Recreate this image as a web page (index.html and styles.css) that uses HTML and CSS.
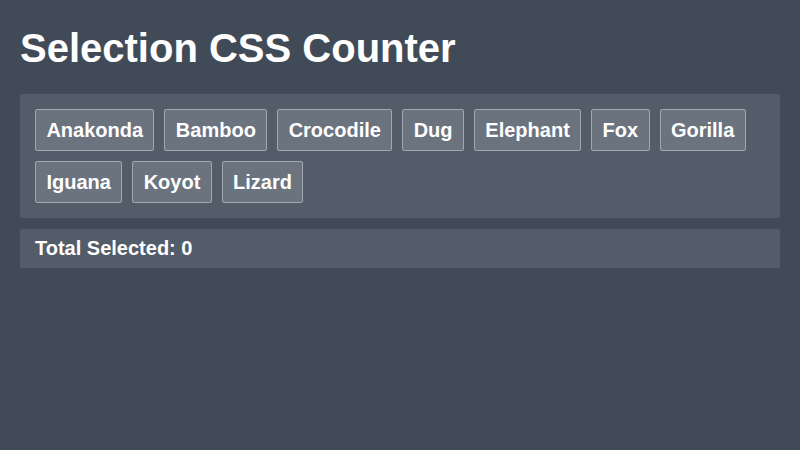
FILE: index.html
```html
<!DOCTYPE html>
<html lang="en">
<head>
<meta charset="utf-8">
<title>Selection CSS Counter</title>
<link rel="stylesheet" href="styles.css">
</head>
<body>
<h1 class="title">Selection CSS Counter</h1>
<div class="panel">
  <button class="chip">Anakonda</button>
  <button class="chip">Bamboo</button>
  <button class="chip">Crocodile</button>
  <button class="chip">Dug</button>
  <button class="chip">Elephant</button>
  <button class="chip">Fox</button>
  <button class="chip">Gorilla</button>
  <button class="chip">Iguana</button>
  <button class="chip">Koyot</button>
  <button class="chip">Lizard</button>
</div>
<div class="total">Total Selected: 0</div>
</body>
</html>
```

FILE: styles.css
```css
html, body {
  margin: 0;
  background: #414b58;
}
body {
  padding: 0 20px;
  font-family: "Liberation Sans", Arial, sans-serif;
  color: #ffffff;
}
.title {
  margin: 25px 0 23px;
  font-size: 40px;
  font-weight: bold;
  line-height: 46px;
}
.panel {
  display: flex;
  flex-wrap: wrap;
  gap: 10px;
  padding: 15px;
  background: #535c69;
  border-radius: 2px;
}
.chip {
  font-family: "Liberation Sans", Arial, sans-serif;
  font-size: 20px;
  font-weight: bold;
  line-height: 22px;
  color: #ffffff;
  background: #6b737f;
  border: 1px solid #a0a7b1;
  border-radius: 2px;
  padding: 9px 10.4px;
  margin: 0;
}
.total {
  margin-top: 11px;
  padding: 8px 15px;
  background: #535c69;
  border-radius: 2px;
  font-size: 20px;
  font-weight: bold;
  line-height: 23px;
}
```
